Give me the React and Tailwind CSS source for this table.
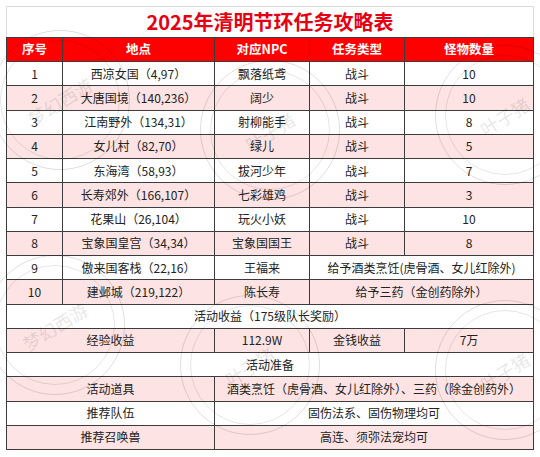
import React from "react";

const font = { fontFamily: '"Noto Sans CJK SC", "Noto Sans", sans-serif' };

const rows = [
  ["1", "西凉女国（4,97）", "飘落纸鸢", "战斗", "10"],
  ["2", "大唐国境（140,236）", "阔少", "战斗", "10"],
  ["3", "江南野外（134,31）", "射柳能手", "战斗", "8"],
  ["4", "女儿村（82,70）", "绿儿", "战斗", "5"],
  ["5", "东海湾（58,93）", "拔河少年", "战斗", "7"],
  ["6", "长寿郊外（166,107）", "七彩雄鸡", "战斗", "3"],
  ["7", "花果山（26,104）", "玩火小妖", "战斗", "10"],
  ["8", "宝象国皇宫（34,34）", "宝象国国王", "战斗", "8"],
];

function Cell({ children, pink, className = "" }) {
  return (
    <div
      className={
        "flex items-center justify-center text-[12px] text-[#222] whitespace-nowrap " +
        (pink ? "bg-[#fde3e3] " : "bg-white ") +
        className
      }
    >
      {children}
    </div>
  );
}

function Stamp({ x, y, text, rot }) {
  return (
    <div className="absolute pointer-events-none" style={{ left: x, top: y }}>
      <div className="absolute -left-[70px] -top-[70px] w-[140px] h-[140px] rounded-full border-[1.5px] border-[rgba(0,0,0,0.13)]" />
      <div className="absolute -left-[60px] -top-[60px] w-[120px] h-[120px] rounded-full border border-[rgba(0,0,0,0.1)]" />
      <div
        className="absolute -left-[50px] -top-[12px] w-[100px] text-center text-[18px] text-[rgba(0,0,0,0.11)] whitespace-nowrap"
        style={{ transform: `rotate(${rot}deg)` }}
      >
        {text}
      </div>
    </div>
  );
}

export default function App() {
  return (
    <div className="relative w-[540px] h-[457px] bg-white pt-[6px] pl-[6px] overflow-hidden" style={font}>
      <div className="w-[528px]">
        <div className="h-[31px] border border-b-0 border-[#dcdcdc] flex items-center justify-center text-[20px] font-bold text-[#e60012] leading-none">
          2025年清明节环任务攻略表
        </div>
        <div className="grid grid-cols-[55px_151px_94px_94px_128px] grid-rows-[23px] auto-rows-[23.25px] gap-px bg-[#3c3c3c] p-px">
          {["序号", "地点", "对应NPC", "任务类型", "怪物数量"].map((h) => (
            <div
              key={h}
              className="bg-[#fe0000] text-white font-bold text-[12.5px] flex items-center justify-center"
            >
              {h}
            </div>
          ))}
          {rows.map((r, i) =>
            r.map((c, j) => (
              <Cell key={i + "-" + j} pink={i % 2 === 1}>
                {c}
              </Cell>
            ))
          )}
          <Cell>9</Cell>
          <Cell>傲来国客栈（22,16）</Cell>
          <Cell>王福来</Cell>
          <Cell className="col-span-2">给予酒类烹饪(虎骨酒、女儿红除外)</Cell>
          <Cell pink>10</Cell>
          <Cell pink>建邺城（219,122）</Cell>
          <Cell pink>陈长寿</Cell>
          <Cell pink className="col-span-2">给予三药（金创药除外）</Cell>
          <Cell className="col-span-5">活动收益（175级队长奖励）</Cell>
          <Cell pink className="col-span-2">经验收益</Cell>
          <Cell pink>112.9W</Cell>
          <Cell pink>金钱收益</Cell>
          <Cell pink>7万</Cell>
          <Cell className="col-span-5">活动准备</Cell>
          <Cell pink className="col-span-2">活动道具</Cell>
          <Cell pink className="col-span-3">酒类烹饪（虎骨酒、女儿红除外）、三药（除金创药外）</Cell>
          <Cell className="col-span-2">推荐队伍</Cell>
          <Cell className="col-span-3">固伤法系、固伤物理均可</Cell>
          <Cell pink className="col-span-2">推荐召唤兽</Cell>
          <Cell pink className="col-span-3">高连、须弥法宠均可</Cell>
        </div>
      </div>
      <Stamp x={60} y={100} text="梦幻西游" rot={-32} />
      <Stamp x={270} y={130} text="叶子猪" rot={-32} />
      <Stamp x={505} y={115} text="叶子猪" rot={-32} />
      <Stamp x={55} y={325} text="梦幻西游" rot={-32} />
      <Stamp x={250} y={365} text="叶子猪" rot={-32} />
      <Stamp x={505} y={370} text="叶子猪" rot={-32} />
    </div>
  );
}
